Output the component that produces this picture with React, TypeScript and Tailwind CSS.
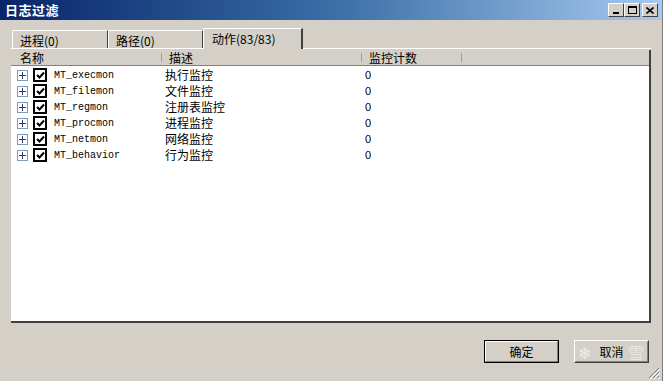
import React from "react";

const rows = [
  { name: "MT_execmon", desc: "执行监控", count: 0 },
  { name: "MT_filemon", desc: "文件监控", count: 0 },
  { name: "MT_regmon", desc: "注册表监控", count: 0 },
  { name: "MT_procmon", desc: "进程监控", count: 0 },
  { name: "MT_netmon", desc: "网络监控", count: 0 },
  { name: "MT_behavior", desc: "行为监控", count: 0 },
];

const cjk = "font-['SimSun','Noto_Sans_CJK_SC',sans-serif]";

function TitleButton({ children }: { children: React.ReactNode }) {
  return (
    <div className="w-[16px] h-[14px] bg-[#d4d0c8] border border-t-white border-l-white border-r-[#404040] border-b-[#404040] flex items-center justify-center">
      {children}
    </div>
  );
}

function Tab({ label, active, width }: { label: string; active?: boolean; width: string }) {
  if (active) {
    return (
      <div
        className={`${width} h-[21px] -mt-[2px] relative z-10 bg-[#d4d0c8] border-t border-l border-t-white border-l-white border-r-2 border-r-[#404040] rounded-tl-[2px] pl-[8px] pt-[1px] text-[12px] text-black ${cjk}`}
      >
        {label}
      </div>
    );
  }
  return (
    <div
      className={`${width} h-[18px] bg-[#d4d0c8] border-t border-l border-t-white border-l-white border-r border-r-[#404040] rounded-tl-[2px] pl-[7px] pt-[1px] text-[12px] text-black ${cjk}`}
    >
      {label}
    </div>
  );
}

function Plus() {
  return (
    <div className="w-[11px] h-[11px] border border-[#7f9db9] bg-white flex items-center justify-center">
      <svg width="7" height="7" viewBox="0 0 7 7">
        <path d="M0 3.5H7M3.5 0V7" stroke="#1c3d7a" strokeWidth="1" />
      </svg>
    </div>
  );
}

function Check() {
  return (
    <div className="w-[14px] h-[14px] border-2 border-black bg-white flex items-center justify-center">
      <svg width="9" height="8" viewBox="0 0 9 8">
        <path d="M1 4L3.5 6.5L8 1.5" stroke="#000" strokeWidth="2" fill="none" />
      </svg>
    </div>
  );
}

export default function App() {
  return (
    <div className={`w-[663px] h-[381px] bg-[#d4d0c8] relative overflow-hidden border-r border-r-[#808080] ${cjk}`}>
      {/* title bar */}
      <div className="h-[20px] bg-gradient-to-r from-[#0a246a] via-[#3a6ea5] to-[#a6caf0] flex items-center pl-[5px] pr-[4px]">
        <span className="text-white text-[13px] font-bold tracking-[0.5px]">日志过滤</span>
        <div className="ml-auto flex items-center">
          <TitleButton>
            <div className="w-[6px] h-[2px] bg-black mt-[6px]" />
          </TitleButton>
          <TitleButton>
            <div className="w-[9px] h-[8px] border border-black border-t-2" />
          </TitleButton>
          <div className="w-[2px]" />
          <TitleButton>
            <svg width="8" height="7" viewBox="0 0 8 7">
              <path d="M0.5 0.5L7.5 6.5M7.5 0.5L0.5 6.5" stroke="#000" strokeWidth="1.6" />
            </svg>
          </TitleButton>
        </div>
      </div>

      {/* tabs */}
      <div className="pt-[10px] pl-[12px] flex items-start">
        <Tab label="进程(0)" width="w-[96px]" />
        <Tab label="路径(0)" width="w-[95px]" />
        <Tab label="动作(83/83)" width="w-[100px]" active />
      </div>

      {/* tab panel */}
      <div className="ml-[11px] mr-[11px] -mt-[1px] border-t border-t-white pt-[1px]">
        <div className="h-[273px] bg-white border-r-2 border-b-2 border-r-[#404040] border-b-[#404040] flex flex-col">
          {/* header */}
          <div className="h-[16px] bg-[#d4d0c8] border-b border-b-[#808080] flex text-[12px] leading-[16px] text-black">
            <div className="w-[150px] pl-[9px]">名称</div>
            <div className="w-[200px] pl-[7px] border-l border-l-[#a0a0a0] my-[3px] leading-[10px]">
              <span className="relative -top-[3px] leading-[16px]">描述</span>
            </div>
            <div className="w-[100px] pl-[7px] border-l border-l-[#a0a0a0] my-[3px] leading-[10px]">
              <span className="relative -top-[3px] leading-[16px]">监控计数</span>
            </div>
            <div className="flex-1 border-l border-l-[#a0a0a0] my-[3px]" />
          </div>
          {/* rows */}
          <div className="pt-[1px]">
            {rows.map((r) => (
              <div key={r.name} className="h-[16px] flex items-center text-[12px] text-black">
                <div className="w-[154px] flex items-center pl-[6px] gap-[5px]">
                  <Plus />
                  <Check />
                  <span className="font-['Liberation_Mono',monospace] text-[10px] ml-[2px]">{r.name}</span>
                </div>
                <div className="w-[200px]">{r.desc}</div>
                <div className="font-['Liberation_Sans',sans-serif] text-[11px]">{r.count}</div>
              </div>
            ))}
          </div>
        </div>
      </div>

      {/* buttons */}
      <div className="flex justify-end gap-[15px] pr-[13px] pt-[17px]">
        <div className="w-[75px] h-[23px] border border-black">
          <div className="w-full h-full border border-t-white border-l-white border-r-[#808080] border-b-[#808080] flex items-center justify-center text-[12px] text-black">
            确定
          </div>
        </div>
        <div className="w-[75px] h-[23px] border border-t-white border-l-white border-r-[#404040] border-b-[#404040] relative">
          <div className="w-full h-full border border-r-[#808080] border-b-[#808080] border-t-transparent border-l-transparent flex items-center justify-center text-[12px] text-black">
            取消
          </div>
          <span className="absolute left-[3px] top-[1px] text-[16px] text-white/60 leading-[20px]">❄</span>
          <span className="absolute right-[4px] top-[1px] text-[16px] text-white/50 leading-[20px]">雪</span>
        </div>
      </div>

      {/* resize grip */}
      <svg className="absolute right-[2px] bottom-[2px]" width="12" height="12" viewBox="0 0 12 12">
        <path d="M11 1L1 11M11 5L5 11M11 9L9 11" stroke="#808080" strokeWidth="1" />
        <path d="M12 2L2 12M12 6L6 12M12 10L10 12" stroke="#ffffff" strokeWidth="1" />
      </svg>
    </div>
  );
}
